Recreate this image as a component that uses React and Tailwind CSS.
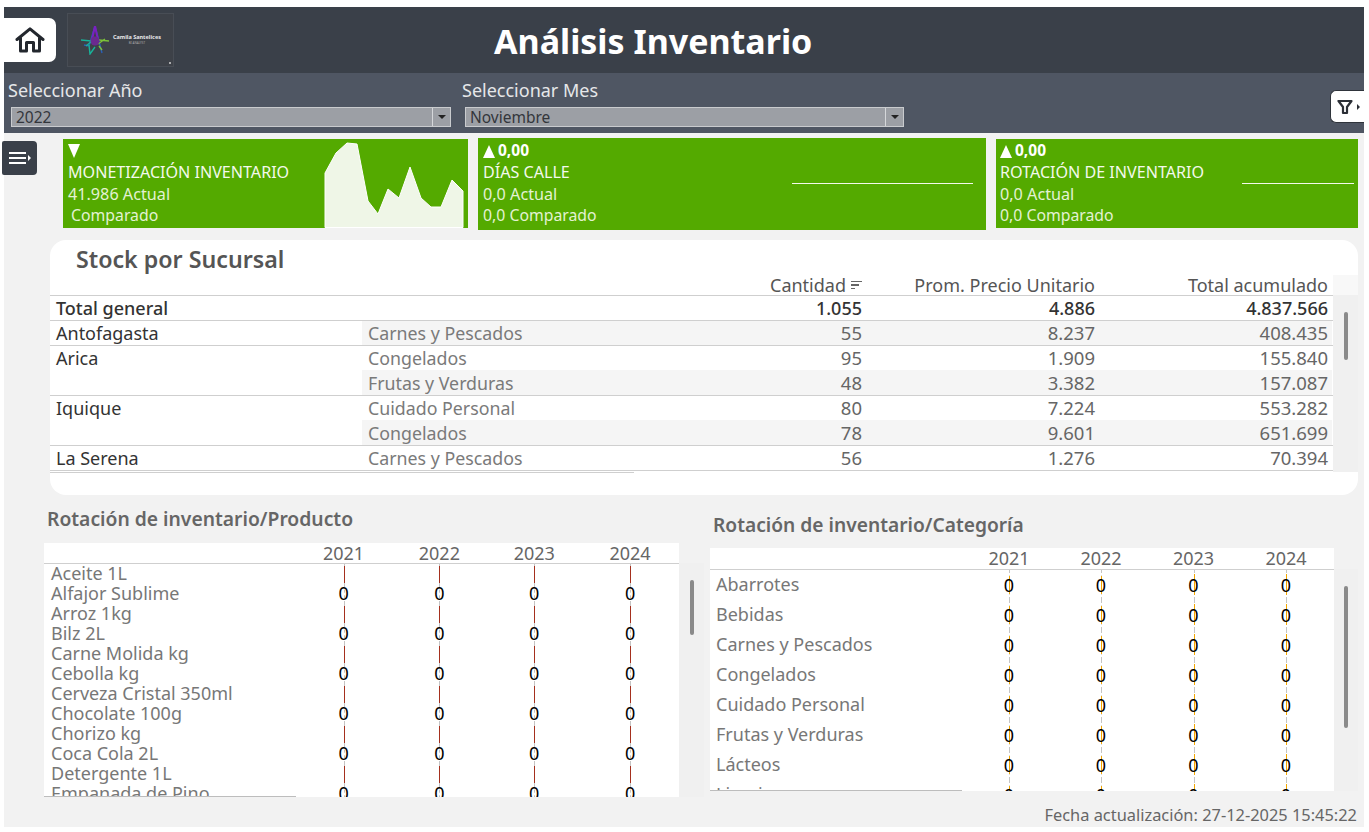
import React from "react";

const FONT = "font-['Noto_Sans','Open_Sans',sans-serif]";
const stockRows = [
  ["Antofagasta", "Carnes y Pescados", "55", "8.237", "408.435", true],
  ["Arica", "Congelados", "95", "1.909", "155.840", false],
  ["", "Frutas y Verduras", "48", "3.382", "157.087", true],
  ["Iquique", "Cuidado Personal", "80", "7.224", "553.282", false],
  ["", "Congelados", "78", "9.601", "651.699", true],
  ["La Serena", "Carnes y Pescados", "56", "1.276", "70.394", false],
];
const productos = ["Aceite 1L","Alfajor Sublime","Arroz 1kg","Bilz 2L","Carne Molida kg","Cebolla kg","Cerveza Cristal 350ml","Chocolate 100g","Chorizo kg","Coca Cola 2L","Detergente 1L","Empanada de Pino"];
const categorias = ["Abarrotes","Bebidas","Carnes y Pescados","Congelados","Cuidado Personal","Frutas y Verduras","Lácteos","Limpieza"];
const years = ["2021","2022","2023","2024"];
const leftW = ["w-[96px]", "w-[96px]", "w-[94px]", "w-[98px]"];
const rightW = ["w-[92px]", "w-[92px]", "w-[93px]", "w-[92px]"];

function Select({ value, w }) {
  return (
    <div className={`flex h-[20px] items-stretch border border-[#c9cbce] bg-[#9c9fa5] ${w}`}>
      <div className="flex-1 pl-1 text-[15.5px] leading-[19px] text-[#33363b]">{value}</div>
      <div className="flex w-[18px] items-center justify-center border-l border-[#d5d7da]">
        <div className="h-0 w-0 border-x-[4px] border-t-[4px] border-x-transparent border-t-[#222]" />
      </div>
    </div>
  );
}

function Kpi({ cls, head, title, actual, comp, chart, compCls }) {
  return (
    <div className={`relative whitespace-nowrap bg-[#54aa00] text-white ${cls}`}>
      <div className="flex h-[22px] items-center gap-[3px] text-[15.5px] font-bold">{head}</div>
      <div className="h-[21.5px] text-[16.1px] leading-[21.5px] text-[#f3f9ec]">{title}</div>
      <div className="h-[21.5px] text-[16.2px] leading-[21.5px] text-[#e3f2d3]">{actual}</div>
      <div className={`h-[21.5px] text-[15.8px] leading-[21.5px] text-[#e3f2d3] ${compCls || ""}`}>{comp}</div>
      {chart}
    </div>
  );
}

const Up = () => <span className="h-0 w-0 border-x-[6px] border-b-[13px] border-x-transparent border-b-white" />;
const Down = () => <span className="h-0 w-0 border-x-[6.5px] border-t-[14px] border-x-transparent border-t-white" />;

function Spark() {
  return (
    <svg className="absolute bottom-0 left-[261px] h-[89px] w-[141px]" viewBox="0 0 141 89">
      <path d="M1 34 L12 14 L23 4 L33 5 L44 62 L54 75 L64 50 L75 59 L86 28 L97 59 L107 68 L117 68 L128 41 L139 52 L139 88.5 L1 88.5 Z" fill="#eff6e7" stroke="#ffffff" strokeWidth="1" />
    </svg>
  );
}

function StockRow({ r }) {
  const [suc, cat, a, b, c, shade] = r;
  return (
    <div className={`flex h-[25px] w-[1283px] items-stretch ${suc ? "border-t border-[#cfcfcf] leading-[24px]" : "leading-[26px]"}`}>
      <div className="w-[312px] pl-[6px] text-[18px] text-[#333]">{suc}</div>
      <div className={`flex w-[970px] ${shade ? "bg-[#f5f5f5]" : ""}`}>
        <div className="w-[350px] pl-[6px] text-[17.8px] text-[#7a7a7a]">{cat}</div>
        <div className="w-[150px] text-right text-[18.5px] text-[#666]">{a}</div>
        <div className="w-[233px] text-right text-[18.5px] text-[#666]">{b}</div>
        <div className="w-[233px] text-right text-[18.5px] text-[#666]">{c}</div>
      </div>
    </div>
  );
}

function ProductCell({ i, w }) {
  const zero = i % 2 === 1;
  return (
    <div className={`relative flex items-center justify-center ${w}`}>
      <span className="absolute inset-y-0 left-1/2 border-l border-dashed border-[#c4c4c4]" />
      {zero ? (
        <span className="relative pb-[3px] text-[18px] leading-none text-black">0</span>
      ) : (
        <span className="absolute left-1/2 top-[2px] h-[17px] w-px bg-[#a5301e]" />
      )}
    </div>
  );
}

function CategoryCell({ strong, w }) {
  return (
    <div className={`relative flex items-center justify-center ${w}`}>
      <span className="absolute inset-y-0 left-1/2 border-l border-dashed border-[#c4c4c4]" />
      <span className={`absolute left-1/2 w-px bg-[#f5a800] ${strong ? "top-[4px] h-[21px]" : "top-[6px] h-[18px]"}`} />
      <span className="relative pb-[1px] text-[18px] leading-none text-black">0</span>
    </div>
  );
}

export default function App() {
  return (
    <div className={`h-[832px] w-[1369px] overflow-hidden bg-white pl-[4px] pt-[7px] ${FONT}`}>
      <div className="flex h-[820px] w-[1360px] flex-col bg-[#f2f2f2]">
        {/* Header */}
        <header className="relative flex h-[66px] items-center bg-[#3a4049]">
          <div className="flex h-[44px] w-[52px] items-center justify-center rounded-r-[7px] bg-white">
            <svg width="30" height="26" viewBox="0 0 30 26" fill="none" stroke="#23272e" strokeWidth="3" strokeLinejoin="round" strokeLinecap="round">
              <path d="M2 12.5 L15 1.8 L28 12.5" />
              <path d="M5.5 11 V24 H11.5 V15.5 H18.5 V24 H24.5 V11" />
            </svg>
          </div>
          <div className="relative ml-[11px] flex h-[54px] w-[107px] items-center justify-start gap-[3px] border border-[#484d55] bg-[#3d4148] pl-[13px]">
            <svg width="29" height="29" viewBox="0 0 29 29" fill="none" strokeWidth="1.4">
              <path d="M14 0 L8 20 L3 19 M14 0 L21 27" stroke="#2a5fb8" />
              <path d="M14 0 L11 14 M14 0 L17 14" stroke="#7a1fc0" strokeWidth="2" />
              <path d="M0 14 L11 15 L5 20 M8 19 L9 28 L14 21" stroke="#18b39a" />
              <path d="M18 14 L28 15 M17 18 L24 13 M18 20 L21 24" stroke="#7cc23a" />
              <circle cx="14" cy="15" r="4.5" fill="#6b2a8f" />
            </svg>
            <div className="text-center leading-none">
              <div className="whitespace-nowrap text-[5.5px] font-bold text-[#e8e8e8]">Camila Santelices</div>
              <div className="mt-[1px] text-[3px] text-[#aaa]">BI ANALYST</div>
            </div>
            <span className="absolute bottom-[2px] right-[2px] h-[2px] w-[2px] rounded-full bg-[#cfcfcf]" />
          </div>
          <h1 className="ml-[320px] mt-[2px] whitespace-nowrap text-[34px] font-bold leading-none text-white">Análisis Inventario</h1>
        </header>

        {/* Filters */}
        <div className="relative flex h-[60px] bg-[#4f5663] pl-[4px] pt-[7px] text-[#e6e7e9]">
          <div className="w-[454px]">
            <div className="h-[20px] text-[18px] leading-[20px]">Seleccionar Año</div>
            <div className="ml-[3px] mt-[7px]"><Select value="2022" w="w-[440px]" /></div>
          </div>
          <div>
            <div className="h-[20px] text-[18px] leading-[20px]">Seleccionar Mes</div>
            <div className="ml-[3px] mt-[7px]"><Select value="Noviembre" w="w-[439px]" /></div>
          </div>
          <div className="absolute right-0 top-[17px] flex h-[33px] w-[34px] items-center gap-[4px] rounded-l-[6px] border border-r-0 border-[#2f343b] bg-white pl-[6px]">
            <svg width="16" height="16" viewBox="0 0 16 16" fill="none" stroke="#2b2f36" strokeWidth="2.2" strokeLinejoin="round"><path d="M1.5 2 H14.5 L10 8 V14 H6 V8 Z" /></svg>
            <span className="h-0 w-0 border-y-[3px] border-l-[3px] border-y-transparent border-l-[#2b2f36]" />
          </div>
        </div>

        {/* KPI row */}
        <div className="relative flex h-[107px] items-start pl-[59px] pt-[5px]">
          <button className="absolute left-[-2px] top-[8px] flex h-[34px] w-[35px] items-center justify-center gap-[2px] rounded-l-[2px] rounded-r-[4px] bg-[#3a4049]">
            <span className="flex w-[17px] flex-col gap-[3px]">
              <span className="h-[2px] bg-white" /><span className="h-[2px] bg-white" /><span className="h-[2px] bg-white" />
            </span>
            <span className="h-0 w-0 border-y-[3px] border-l-[3px] border-y-transparent border-l-white" />
          </button>
          <div className="mt-[1px]"><Kpi cls="h-[89px] w-[405px] pl-[5px] pt-[1px]" head={<Down />} title="MONETIZACIÓN INVENTARIO" actual="41.986 Actual" comp="Comparado" compCls="pl-[3px]" chart={<Spark />} /></div>
          <div className="ml-[10px]"><Kpi cls="h-[92px] w-[508px] pl-[5px] pt-[2px]" head={<><Up /><span>0,00</span></>} title="DÍAS CALLE" actual="0,0 Actual" comp="0,0 Comparado" chart={<div className="absolute left-[314px] top-[45px] h-px w-[181px] bg-[#f3f9ec]" />} /></div>
          <div className="ml-[10px] mt-[1px]"><Kpi cls="h-[89px] w-[362px] pl-[4px] pt-[1px]" head={<><Up /><span>0,00</span></>} title="ROTACIÓN DE INVENTARIO" actual="0,0 Actual" comp="0,0 Comparado" chart={<div className="absolute left-[246px] top-[44px] h-px w-[112px] bg-[#f3f9ec]" />} /></div>
        </div>

        {/* Stock table */}
        <section className="relative ml-[46px] h-[255px] w-[1308px] overflow-hidden rounded-[16px] bg-white">
          <h2 className="h-[35px] pl-[26px] pt-[4px] text-[23.2px] font-semibold leading-[30px] text-[#555]">Stock por Sucursal</h2>
          <div className="flex h-[20px] text-[18px] leading-[20px] text-[#555]">
            <div className="w-[662px]" />
            <div className="flex w-[150px] items-center justify-end">
              <span>Cantidad</span>
              <span className="ml-[5px] flex w-[11px] flex-col items-start gap-[2px]"><span className="h-[1.5px] w-[11px] bg-[#666]" /><span className="h-[1.5px] w-[8px] bg-[#666]" /><span className="h-[1.5px] w-[4px] bg-[#666]" /></span>
            </div>
            <div className="w-[233px] text-right">Prom. Precio Unitario</div>
            <div className="w-[233px] text-right">Total acumulado</div>
          </div>
          <div className="flex h-[25px] w-[1283px] border-t border-[#cfcfcf] text-[18px] font-medium leading-[24px] text-[#333]">
            <div className="w-[662px] pl-[6px]">Total general</div>
            <div className="w-[150px] text-right">1.055</div>
            <div className="w-[233px] text-right">4.886</div>
            <div className="w-[233px] text-right">4.837.566</div>
          </div>
          {stockRows.map((r, i) => <StockRow key={i} r={r} />)}
          <div className="w-[1283px] border-t border-[#cfcfcf]" />
          <div className="mt-[1px] w-[584px] border-t border-[#cfcfcf]" />
          <div className="absolute left-[1283px] top-[35px] h-[20px] w-[25px] bg-[#f8f8f8]" />
          <div className="absolute left-[1283px] top-[55px] h-[177px] w-[25px] bg-[#f0f0f0]" />
          <div className="absolute right-[10px] top-[72px] h-[48px] w-[4px] rounded-full bg-[#8a8a8a]" />
        </section>

        {/* Bottom */}
        <div className="relative flex h-[302px] items-start">
          <div className="absolute left-[675px] top-[68px] h-[234px] w-[25px] bg-[#f0f0f0]" />
          <div className="absolute left-[1330px] top-[74px] h-[222px] w-[24px] bg-[#f0f0f0]" />
          <div className="relative ml-[40px] w-[660px]">
            <h3 className="h-[48px] whitespace-nowrap pl-[3px] pt-[10px] text-[19.3px] font-semibold leading-[28px] text-[#666]">Rotación de inventario/Producto</h3>
            <div className="relative h-[254px] w-[635px] overflow-hidden bg-white">
              <div className="flex h-[21px] border-b border-[#cfcfcf] text-[18px] leading-[20px] text-[#666]">
                <div className="w-[252px]" />
                {years.map((y, j) => <div key={y} className={`text-center ${leftW[j]}`}>{y}</div>)}
              </div>
              {productos.map((p, i) => (
                <div key={p} className="flex h-[20px]">
                  <div className="w-[252px] pl-[7px] text-[18px] leading-[19px] text-[#777]">{p}</div>
                  {years.map((y, j) => <ProductCell key={y} i={i} w={leftW[j]} />)}
                </div>
              ))}
              <div className="absolute bottom-0 left-0 h-px w-[252px] bg-[#bdbdbd]" />
            </div>
            <div className="absolute left-[646px] top-[85px] h-[55px] w-[4px] rounded-full bg-[#8a8a8a]" />
          </div>
          <div className="relative ml-[6px] w-[650px]">
            <h3 className="h-[48px] whitespace-nowrap pl-[3px] pt-[16px] text-[19.2px] font-semibold leading-[28px] text-[#666]">Rotación de inventario/Categoría</h3>
            <div className="relative mt-[5px] h-[243px] w-[624px] overflow-hidden bg-white">
              <div className="flex h-[22px] border-b border-[#cfcfcf] text-[18px] leading-[21px] text-[#666]">
                <div className="w-[253px]" />
                {years.map((y, j) => <div key={y} className={`text-center ${rightW[j]}`}>{y}</div>)}
              </div>
              {categorias.map((p) => (
                <div key={p} className="flex h-[30px]">
                  <div className="flex w-[253px] items-center pb-[1px] pl-[6px] text-[18px] text-[#777]">{p}</div>
                  {years.map((y, j) => <CategoryCell key={y} strong={j > 1} w={rightW[j]} />)}
                </div>
              ))}
              <div className="absolute bottom-0 left-0 h-px w-[252px] bg-[#bdbdbd]" />
            </div>
            <div className="absolute left-[634px] top-[91px] h-[142px] w-[4px] rounded-full bg-[#8a8a8a]" />
          </div>
        </div>

        <footer className="mt-[8px] pr-[7px] text-right text-[16.4px] leading-[20px] text-[#666]">Fecha actualización: 27-12-2025 15:45:22</footer>
      </div>
    </div>
  );
}
